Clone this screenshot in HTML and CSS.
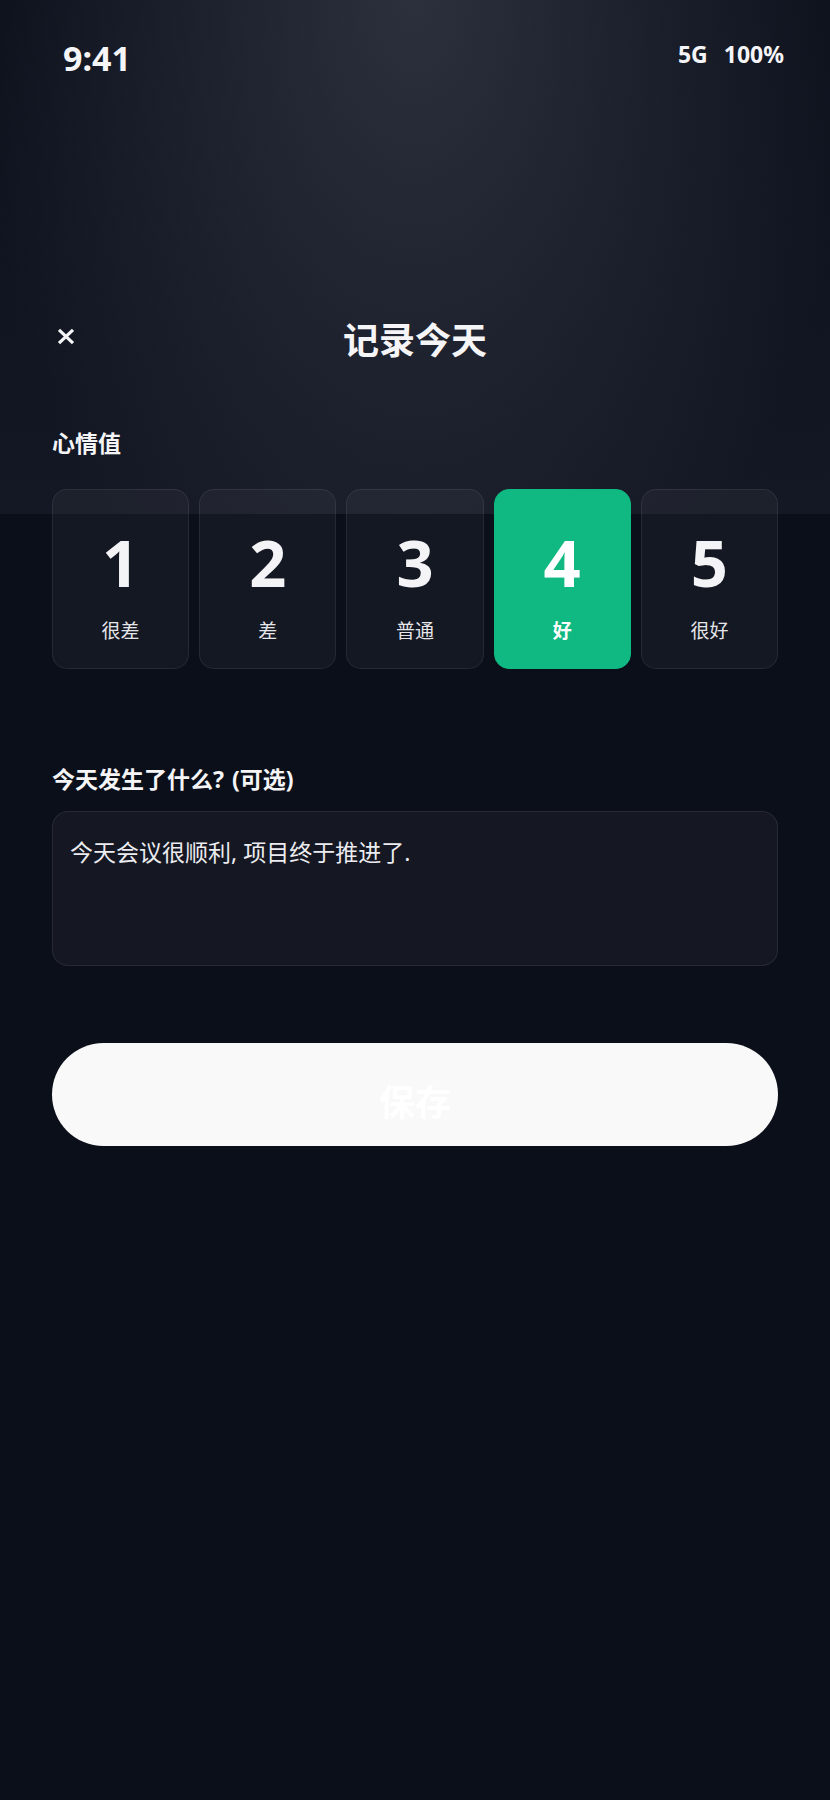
FILE: index.html
```html
<!DOCTYPE html>
<html lang="zh-CN">
<head>
<meta charset="utf-8">
<title>记录今天</title>
<link rel="stylesheet" href="styles.css">
</head>
<body>
<div class="screen">
  <div class="status">
    <span class="time">9:41</span>
    <span class="sys"><span>5G</span><span>100%</span></span>
  </div>

  <main class="content">
    <header class="topbar">
      <button class="close" aria-label="关闭">
        <svg width="18" height="17" viewBox="0 0 18 17" aria-hidden="true">
          <path d="M2 1.8 L16 15.2 M16 1.8 L2 15.2" stroke="#f5f5f7" stroke-width="3.2" fill="none"/>
        </svg>
      </button>
      <h1 class="title">记录今天</h1>
      <span></span>
    </header>

    <h2 class="section-label mood-label">心情值</h2>
    <div class="moods">
      <div class="mood"><span class="num">1</span><span class="word">很差</span></div>
      <div class="mood"><span class="num">2</span><span class="word">差</span></div>
      <div class="mood"><span class="num">3</span><span class="word">普通</span></div>
      <div class="mood active"><span class="num">4</span><span class="word">好</span></div>
      <div class="mood"><span class="num">5</span><span class="word">很好</span></div>
    </div>

    <h2 class="section-label note-label">今天发生了什么? (可选)</h2>
    <textarea class="note">今天会议很顺利, 项目终于推进了.</textarea>

    <button class="save">保存</button>
  </main>
</div>
</body>
</html>
```

FILE: styles.css
```css
* { box-sizing: border-box; }

html, body {
  margin: 0;
  padding: 0;
}

body {
  background: #0b0f1a;
  font-family: "Noto Sans", "Noto Sans CJK SC", sans-serif;
  color: #f5f5f7;
}

.screen {
  min-height: 1800px;
  background:
    radial-gradient(ellipse 450px 700px at 50% 0%, rgba(46, 50, 63, 0.95) 0%, rgba(46, 50, 63, 0) 100%) top / 100% 514px no-repeat,
    linear-gradient(180deg, #0c101b 0%, #141824 100%) top / 100% 514px no-repeat,
    #0b0f1a;
}

.status {
  display: flex;
  justify-content: space-between;
  align-items: flex-start;
  padding: 38px 46px 0 63px;
}

.time {
  font-size: 34px;
  line-height: 40px;
  font-weight: 700;
}

.sys {
  display: flex;
  gap: 16px;
  font-size: 23px;
  line-height: 32px;
  font-weight: 700;
}

.content {
  padding: 0 52px;
}

.topbar {
  display: grid;
  grid-template-columns: 1fr auto 1fr;
  align-items: start;
  margin-top: 241px;
}

.close {
  justify-self: start;
  background: none;
  border: 0;
  padding: 0;
  margin: 9px 0 0 5px;
  width: 18px;
  height: 17px;
  display: block;
}

.close svg { display: block; }

.title {
  margin: 0;
  font-size: 36px;
  line-height: 44px;
  font-weight: 700;
  text-align: center;
}

.section-label {
  margin: 0;
  font-size: 23px;
  line-height: 32px;
  font-weight: 700;
}

.mood-label { margin-top: 64px; }

.moods {
  display: grid;
  grid-template-columns: repeat(5, 1fr);
  gap: 10px;
  margin-top: 30px;
}

.mood {
  height: 180px;
  border-radius: 15px;
  background: rgba(255, 255, 255, 0.04);
  border: 1px solid rgba(255, 255, 255, 0.075);
  display: flex;
  flex-direction: column;
  align-items: center;
  padding-top: 40px;
}

.mood .num {
  font-size: 65px;
  line-height: 65px;
  font-weight: 700;
  color: #f4f4f7;
}

.mood .word {
  margin-top: 23px;
  font-size: 19px;
  line-height: 26px;
  color: #e6e6ea;
}

.mood.active {
  background: #10b981;
  border-color: #10b981;
}

.mood.active .num,
.mood.active .word {
  color: #ffffff;
}

.mood.active .word { font-weight: 700; }

.note-label {
  margin-top: 94px;
  word-spacing: 2px;
}

.note {
  display: block;
  width: 100%;
  height: 155px;
  margin-top: 16px;
  padding: 23px 17px;
  background: #151823;
  border: 1px solid rgba(255, 255, 255, 0.08);
  border-radius: 16px;
  color: #ececf0;
  font-family: "Noto Sans", "Noto Sans CJK SC", sans-serif;
  font-size: 23px;
  line-height: 34px;
  resize: none;
  outline: none;
  overflow: hidden;
}

.save {
  display: flex;
  align-items: center;
  justify-content: center;
  width: 100%;
  height: 103px;
  margin-top: 77px;
  padding: 11px 0 0;
  border: 0;
  border-radius: 52px;
  background: #f9f9f9;
  color: #ffffff;
  font-family: "Noto Sans", "Noto Sans CJK SC", sans-serif;
  font-size: 36px;
  font-weight: 700;
}
```
